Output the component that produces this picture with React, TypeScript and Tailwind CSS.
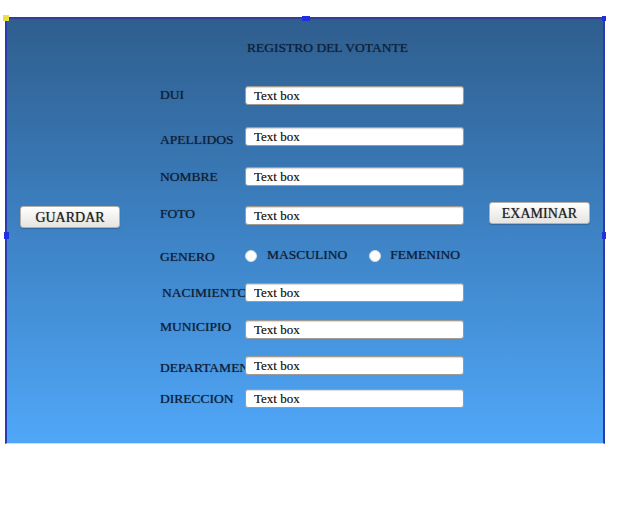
import React from "react";

const serif = { fontFamily: '"Liberation Serif", "Times New Roman", serif' };

function Box() {
  return (
    <div className="w-[219px] h-[19px] shrink-0 bg-white border border-[#a09a94] rounded-[3px] shadow-[inset_0_1px_1px_rgba(0,0,0,0.15)] pl-[8px] text-[13px] leading-[17px] text-[#1e1e1e] [text-shadow:0_0_0.6px_rgba(30,30,30,0.6)]">
      Text box
    </div>
  );
}

function Label({ text, mt = 0, pl = 0 }: { text: string; mt?: number; pl?: number }) {
  return (
    <div
      className="w-[85px] shrink-0 overflow-hidden whitespace-nowrap text-[13.5px] leading-[19px] text-[#102038] [text-shadow:0_0_0.8px_rgba(16,32,56,0.7)]"
      style={{ marginTop: mt, marginBottom: -mt, paddingLeft: pl }}
    >
      {text}
    </div>
  );
}

function Btn({ text, w }: { text: string; w: number }) {
  return (
    <div
      className="h-[22px] flex items-center justify-center rounded-[3px] border border-[#b4b0aa] bg-gradient-to-b from-white to-[#e6e4e0] text-[14px] text-[#222] [text-shadow:0_0_0.8px_rgba(30,30,30,0.6)] shadow-[0_1px_1px_rgba(0,0,0,0.2)]"
      style={{ width: w }}
    >
      {text}
    </div>
  );
}

function Radio() {
  return <div className="w-[12px] h-[12px] rounded-full bg-white border border-[#d8d8d8] shrink-0" />;
}

const txt = "text-[13.5px] text-[#102038] whitespace-nowrap [text-shadow:0_0_0.8px_rgba(16,32,56,0.7)]";

export default function App() {
  return (
    <div className="w-[619px] h-[523px] bg-white" style={serif}>
      <div className="pl-[5px] pt-[17px]">
        <div className="relative w-[600px] h-[427px] border-t-2 border-l-2 border-r-2 border-t-[#2c3f9c] border-l-[#2a3bb0] border-r-[#2a3bb0] bg-gradient-to-b from-[#2f5e8e] via-[#3d82c4] to-[#50a7f8] border-b border-b-[#c5def7]">
          <div className="flex flex-col">
            {/* title */}
            <div className="flex mt-[21px]">
              <div className="w-[240px] shrink-0" />
              <div className={"leading-[16px] " + "text-[13.5px] text-[#102038] whitespace-nowrap [text-shadow:0_0_0.8px_rgba(16,32,56,0.7)]"}>REGISTRO DEL VOTANTE</div>
            </div>
            {/* DUI */}
            <div className="flex items-start mt-[30px]">
              <div className="w-[153px] shrink-0" />
              <Label text="DUI" mt={-1} />
              <Box />
            </div>
            {/* APELLIDOS */}
            <div className="flex items-start mt-[22px]">
              <div className="w-[153px] shrink-0" />
              <Label text="APELLIDOS" mt={3} />
              <Box />
            </div>
            {/* NOMBRE */}
            <div className="flex items-start mt-[21px]">
              <div className="w-[153px] shrink-0" />
              <Label text="NOMBRE" mt={0} />
              <Box />
            </div>
            {/* FOTO */}
            <div className="flex items-start mt-[16px]">
              <div className="w-[153px] shrink-0 pl-[13px] pt-[4px]">
                <Btn text="GUARDAR" w={100} />
              </div>
              <Label text="FOTO" mt={2} />
              <div className="mt-[4px]">
                <Box />
              </div>
              <div className="ml-[25px]">
                <Btn text="EXAMINAR" w={101} />
              </div>
            </div>
            {/* GENERO */}
            <div className="flex items-center mt-[18px] h-[19px]">
              <div className="w-[153px] shrink-0" />
              <Label text="GENERO" mt={1} />
              <Radio />
              <div className={"ml-[10px] " + txt}>MASCULINO</div>
              <div className="ml-[22px]">
                <Radio />
              </div>
              <div className={"ml-[9px] " + txt}>FEMENINO</div>
            </div>
            {/* NACIMIENTO */}
            <div className="flex items-start mt-[18px]">
              <div className="w-[153px] shrink-0" />
              <Label text="NACIMIENTO" mt={0} pl={2} />
              <Box />
            </div>
            {/* MUNICIPIO */}
            <div className="flex items-start mt-[18px]">
              <div className="w-[153px] shrink-0" />
              <Label text="MUNICIPIO" mt={-3} />
              <Box />
            </div>
            {/* DEPARTAMENTO */}
            <div className="flex items-start mt-[17px]">
              <div className="w-[153px] shrink-0" />
              <Label text="DEPARTAMENTO" mt={2} />
              <Box />
            </div>
            {/* DIRECCION */}
            <div className="flex items-start mt-[14px]">
              <div className="w-[153px] shrink-0" />
              <Label text="DIRECCION" mt={0} />
              <Box />
            </div>
          </div>

          {/* selection handles */}
          <div className="absolute left-[-4px] top-[-4px] w-[6px] h-[6px] bg-[#e8e040]" />
          <div className="absolute left-[295px] top-[-3px] w-[8px] h-[5px] bg-[#2030e0]" />
          <div className="absolute right-[-3px] top-[-3px] w-[4px] h-[5px] bg-[#2030e0]" />
          <div className="absolute left-[-3px] top-[213px] w-[5px] h-[7px] bg-[#2030e0]" />
          <div className="absolute right-[-3px] top-[213px] w-[4px] h-[7px] bg-[#2030e0]" />
        </div>
      </div>
    </div>
  );
}
